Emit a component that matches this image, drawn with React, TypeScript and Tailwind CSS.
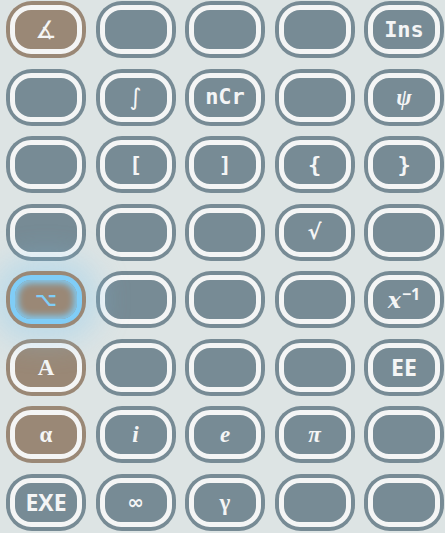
type Key = {
  label: React.ReactNode;
  tone?: "slate" | "brown";
  font?: string;
  active?: boolean;
};

const mono = "font-['DejaVu_Sans_Mono',monospace] font-bold text-[22px]";
const sans = "font-['Open_Sans',sans-serif] font-bold text-[23px]";
const serif = "font-['Liberation_Serif',serif] font-bold text-[23px]";
const serifIt = "font-['Liberation_Serif',serif] font-bold italic text-[23px]";
const dv = "font-['DejaVu_Sans',sans-serif]";

const keys: Key[] = [
  { label: "∡", tone: "brown", font: `${dv} text-[24px]` },
  { label: "" },
  { label: "" },
  { label: "" },
  { label: "Ins", font: mono },

  { label: "" },
  { label: "∫", font: `${dv} text-[23px]` },
  { label: "nCr", font: mono },
  { label: "" },
  { label: "ψ", font: serifIt },

  { label: "" },
  { label: "[", font: mono },
  { label: "]", font: mono },
  { label: "{", font: mono },
  { label: "}", font: mono },

  { label: "" },
  { label: "" },
  { label: "" },
  { label: "√", font: `${dv} font-bold text-[21px]` },
  { label: "" },

  { label: "⌥", tone: "brown", active: true, font: `${dv} font-bold text-[19px]` },
  { label: "" },
  { label: "" },
  { label: "" },
  {
    label: (
      <>
        <span className="font-['DejaVu_Serif',serif] italic text-[22px]">x</span>
        <sup className="font-['Open_Sans',sans-serif] text-[16px] relative -top-[8px] ml-[1px]">−1</sup>
      </>
    ),
    font: "font-bold flex items-baseline",
  },

  { label: "A", tone: "brown", font: serif },
  { label: "" },
  { label: "" },
  { label: "" },
  { label: "EE", font: sans },

  { label: "α", tone: "brown", font: serif },
  { label: "i", font: serifIt },
  { label: "e", font: serifIt },
  { label: "π", font: serifIt },
  { label: "" },

  { label: "EXE", font: sans },
  { label: "∞", font: `${dv} font-bold text-[20px]` },
  { label: "γ", font: serif },
  { label: "" },
  { label: "" },
];

function CalcKey({ k }: { k: Key }) {
  const brown = k.tone === "brown";
  const bg = brown ? "bg-[#9a8876]" : "bg-[#778b95]";
  const ring = k.active
    ? "border-[#80cdf7] shadow-[inset_0_0_7px_3px_#80cdf7]"
    : "border-[#f4f5f5]";
  const text = k.active ? "text-[#80cdf7]" : "text-[#f4f5f5]";
  return (
    <div
      className={`${bg} relative w-[80px] h-[57px] rounded-[26px] p-[4px] ${
        k.active ? "z-10 shadow-[0_0_30px_14px_rgba(128,200,240,0.35)]" : ""
      }`}
    >
      <div
        className={`${bg} ${ring} ${text} h-full w-full rounded-[21px] border-[5px] flex items-center justify-center leading-none`}
      >
        <span className={k.font}>{k.label}</span>
      </div>
    </div>
  );
}

export default function App() {
  return (
    <div className="w-[445px] h-[533px] bg-[#dde4e4] overflow-hidden pl-[6px] pt-[1px]">
      <div className="grid grid-cols-[repeat(5,80px)] gap-x-[9.5px] gap-y-[10.5px]">
        {keys.map((k, i) => (
          <CalcKey key={i} k={k} />
        ))}
      </div>
    </div>
  );
}
